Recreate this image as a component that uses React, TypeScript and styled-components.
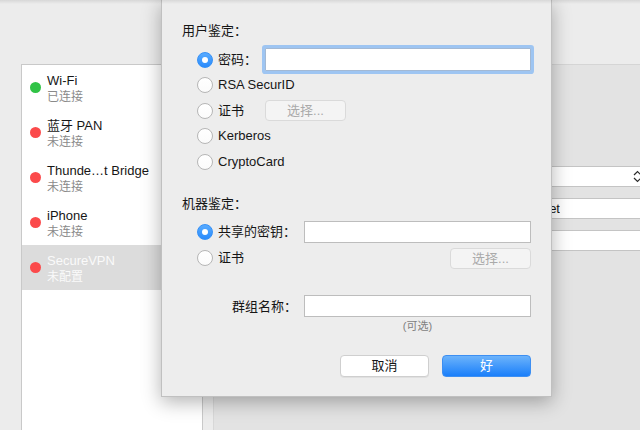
import React from 'react';
import styled, { createGlobalStyle } from 'styled-components';

const GlobalStyle = createGlobalStyle`
  html, body { margin: 0; padding: 0; background: #ececec; }
  body {
    font-family: "Helvetica Neue", "Liberation Sans", "Noto Sans CJK SC", sans-serif;
    -webkit-font-smoothing: antialiased;
  }
  * { box-sizing: border-box; }
`;

const Window = styled.div`
  position: relative;
  width: 640px;
  height: 430px;
  overflow: hidden;
  background: #ececec;
  display: flex;
  flex-direction: column;
  color: #161616;
  font-size: 13px;
  &::after {
    content: '';
    position: absolute;
    left: 0;
    right: 0;
    top: 0;
    height: 4px;
    background: linear-gradient(rgba(0, 0, 0, 0.09), rgba(0, 0, 0, 0));
    pointer-events: none;
  }
`;

const Toolbar = styled.div`
  height: 64px;
  flex: none;
`;

const Body = styled.div`
  flex: 1;
  min-height: 0;
  display: flex;
  gap: 10px;
  padding-left: 21px;
`;

const ServiceList = styled.div`
  width: 182px;
  flex: none;
  background: #fff;
  border: 1px solid #c9c9c9;
  border-bottom: none;
  display: flex;
  flex-direction: column;
`;

const ServiceRow = styled.div<{ $selected?: boolean }>`
  height: 45px;
  display: flex;
  align-items: center;
  gap: 6px;
  padding-left: 8px;
  background: ${(p) => (p.$selected ? '#dcdcdc' : 'transparent')};
  color: ${(p) => (p.$selected ? '#fafafa' : '#161616')};
`;

const StatusDot = styled.span<{ $color: string }>`
  width: 11px;
  height: 11px;
  border-radius: 50%;
  flex: none;
  background: ${(p) => p.$color};
`;

const ServiceText = styled.div`
  display: flex;
  flex-direction: column;
  margin-top: 3px;
`;

const ServiceName = styled.div`
  font-size: 13px;
  line-height: 16px;
  white-space: nowrap;
`;

const ServiceStatus = styled.div<{ $selected?: boolean }>`
  font-size: 12px;
  line-height: 16px;
  color: ${(p) => (p.$selected ? '#fafafa' : '#8a8a8a')};
`;

const DetailPane = styled.div`
  flex: 1;
  background: #e3e3e3;
  border-top: 1px solid #d5d5d5;
  border-left: 1px solid #d8d8d8;
  padding-top: 101px;
  padding-left: 190px;
`;

const PaneControls = styled.div`
  width: 250px;
  display: flex;
  flex-direction: column;
  gap: 11px;
`;

const PopUp = styled.div`
  height: 21px;
  background: #fff;
  border: 1px solid #c4c4c4;
  border-radius: 4px;
  display: flex;
  align-items: center;
  justify-content: space-between;
  padding: 0 11px 0 6px;
`;

const PaneField = styled.div`
  height: 21px;
  background: #fff;
  border: 1px solid #c4c4c4;
  display: flex;
  align-items: center;
  padding-left: 4px;
`;

const PaneFieldValue = styled.span`
  display: inline-block;
  width: 151px;
  text-align: right;
  white-space: nowrap;
  overflow: hidden;
  font-size: 13px;
`;

const Sheet = styled.div`
  position: absolute;
  left: 161px;
  top: 0;
  width: 391px;
  height: 397px;
  background: #ededed;
  border: 1px solid #c0c0c0;
  border-top: none;
  box-shadow: 0 5px 18px rgba(0, 0, 0, 0.3);
  padding: 22px 20px 20px 20px;
  display: flex;
  flex-direction: column;
`;

const SectionLabel = styled.div<{ $gap?: number }>`
  font-size: 13px;
  line-height: 18px;
  margin-top: ${(p) => p.$gap ?? 0}px;
`;

const OptionGroup = styled.div<{ $gap: number }>`
  display: flex;
  flex-direction: column;
  padding-left: 15px;
  margin-top: ${(p) => p.$gap}px;
`;

const OptionRow = styled.div<{ $h: number; $spread?: boolean }>`
  height: ${(p) => p.$h}px;
  display: flex;
  align-items: center;
  justify-content: ${(p) => (p.$spread ? 'space-between' : 'flex-start')};
`;

const Option = styled.label<{ $min?: number }>`
  display: flex;
  align-items: center;
  gap: 5px;
  min-width: ${(p) => p.$min ?? 0}px;
  flex: none;
`;

const Radio = styled.span<{ $checked?: boolean }>`
  width: 16px;
  height: 16px;
  border-radius: 50%;
  flex: none;
  display: flex;
  align-items: center;
  justify-content: center;
  background: ${(p) => (p.$checked ? 'linear-gradient(#58abff, #2a8bfc)' : 'linear-gradient(#ffffff, #fbfbfb)')};
  border: 1px solid ${(p) => (p.$checked ? '#3590f6' : '#b6b6b6')};
  &::after {
    content: '';
    width: 6px;
    height: 6px;
    border-radius: 50%;
    background: #fff;
    display: ${(p) => (p.$checked ? 'block' : 'none')};
  }
`;

const OptionLabel = styled.span`
  font-size: 13px;
  line-height: 16px;
  white-space: nowrap;
`;

const TextField = styled.input<{ $focused?: boolean; $w: number; $h?: number }>`
  appearance: none;
  outline: none;
  font: inherit;
  width: ${(p) => p.$w}px;
  height: ${(p) => p.$h ?? 22}px;
  background: #fff;
  border: 1px solid ${(p) => (p.$focused ? '#a3b9d4' : '#bdbdbd')};
  border-radius: ${(p) => (p.$focused ? '1px' : '0')};
  box-shadow: ${(p) => (p.$focused ? '0 0 0 3px #9ec5f2' : 'none')};
  padding: 0 4px;
  margin: 0;
`;

const ChooseButton = styled.button`
  appearance: none;
  font: inherit;
  font-size: 13px;
  width: 81px;
  height: 21px;
  padding: 0;
  background: #f4f4f4;
  border: 1px solid #dadada;
  border-radius: 4px;
  color: #aaaaaa;
  line-height: 19px;
`;

const GroupGrid = styled.div`
  display: grid;
  grid-template-columns: 1fr 227px;
  column-gap: 7px;
  margin-top: 21.5px;
`;

const GroupLabel = styled.div`
  height: 26px;
  display: flex;
  align-items: center;
  justify-content: flex-end;
  font-size: 13px;
`;

const GroupFieldCell = styled.div`
  height: 26px;
  display: flex;
  align-items: center;
`;

const Hint = styled.div`
  grid-column: 2;
  text-align: center;
  font-size: 11px;
  line-height: 14px;
  color: #7f7f7f;
`;

const ButtonRow = styled.div`
  display: flex;
  justify-content: flex-end;
  gap: 13px;
  margin-top: 22px;
`;

const PushButton = styled.button<{ $primary?: boolean }>`
  appearance: none;
  font: inherit;
  font-size: 13px;
  width: 89px;
  height: 22px;
  padding: 0;
  border-radius: 4px;
  line-height: 20px;
  color: ${(p) => (p.$primary ? '#ffffff' : '#161616')};
  background: ${(p) => (p.$primary ? 'linear-gradient(#6cb3fb, #1a7ffa)' : '#ffffff')};
  border: 1px solid ${(p) => (p.$primary ? '#3d8ff2' : '#cfcfcf')};
  box-shadow: ${(p) => (p.$primary ? 'none' : '0 1px 0 rgba(0,0,0,0.05)')};
`;

const services = [
  { name: 'Wi-Fi', status: '已连接', color: '#30c346' },
  { name: '蓝牙 PAN', status: '未连接', color: '#fb4a4b' },
  { name: 'Thunde…t Bridge', status: '未连接', color: '#fb4a4b' },
  { name: 'iPhone', status: '未连接', color: '#fb4a4b' },
  { name: 'SecureVPN', status: '未配置', color: '#fb4a4b', selected: true },
];

function Chevrons() {
  return (
    <svg width="9" height="13" viewBox="0 0 9 13" fill="none" stroke="#2a2a2a" strokeWidth="1.2">
      <path d="M1 5 L4.5 1.5 L8 5" />
      <path d="M1 8 L4.5 11.5 L8 8" />
    </svg>
  );
}

export default function App() {
  return (
    <>
      <GlobalStyle />
      <Window>
        <Toolbar />
        <Body>
          <ServiceList>
            {services.map((s) => (
              <ServiceRow key={s.name} $selected={s.selected}>
                <StatusDot $color={s.color} />
                <ServiceText>
                  <ServiceName>{s.name}</ServiceName>
                  <ServiceStatus $selected={s.selected}>{s.status}</ServiceStatus>
                </ServiceText>
              </ServiceRow>
            ))}
          </ServiceList>
          <DetailPane>
            <PaneControls>
              <PopUp>
                <span>默认</span>
                <Chevrons />
              </PopUp>
              <PaneField>
                <PaneFieldValue>vpn.example.net</PaneFieldValue>
              </PaneField>
              <PaneField />
            </PaneControls>
          </DetailPane>
        </Body>
        <Sheet>
          <SectionLabel>用户鉴定：</SectionLabel>
          <OptionGroup $gap={7}>
            <OptionRow $h={25.5}>
              <Option $min={68}>
                <Radio $checked />
                <OptionLabel>密码：</OptionLabel>
              </Option>
              <TextField $focused $w={266} $h={23} readOnly />
            </OptionRow>
            <OptionRow $h={25.5}>
              <Option>
                <Radio />
                <OptionLabel>RSA SecurID</OptionLabel>
              </Option>
            </OptionRow>
            <OptionRow $h={25.5}>
              <Option $min={68}>
                <Radio />
                <OptionLabel>证书</OptionLabel>
              </Option>
              <ChooseButton disabled>选择...</ChooseButton>
            </OptionRow>
            <OptionRow $h={25.5}>
              <Option>
                <Radio />
                <OptionLabel>Kerberos</OptionLabel>
              </Option>
            </OptionRow>
            <OptionRow $h={25.5}>
              <Option>
                <Radio />
                <OptionLabel>CryptoCard</OptionLabel>
              </Option>
            </OptionRow>
          </OptionGroup>

          <SectionLabel $gap={20}>机器鉴定：</SectionLabel>
          <OptionGroup $gap={6.5}>
            <OptionRow $h={26}>
              <Option $min={107}>
                <Radio $checked />
                <OptionLabel>共享的密钥：</OptionLabel>
              </Option>
              <TextField $w={227} readOnly />
            </OptionRow>
            <OptionRow $h={26} $spread>
              <Option>
                <Radio />
                <OptionLabel>证书</OptionLabel>
              </Option>
              <ChooseButton disabled>选择...</ChooseButton>
            </OptionRow>
          </OptionGroup>

          <GroupGrid>
            <GroupLabel>群组名称：</GroupLabel>
            <GroupFieldCell>
              <TextField $w={227} readOnly />
            </GroupFieldCell>
            <Hint>(可选)</Hint>
          </GroupGrid>

          <ButtonRow>
            <PushButton>取消</PushButton>
            <PushButton $primary>好</PushButton>
          </ButtonRow>
        </Sheet>
      </Window>
    </>
  );
}
